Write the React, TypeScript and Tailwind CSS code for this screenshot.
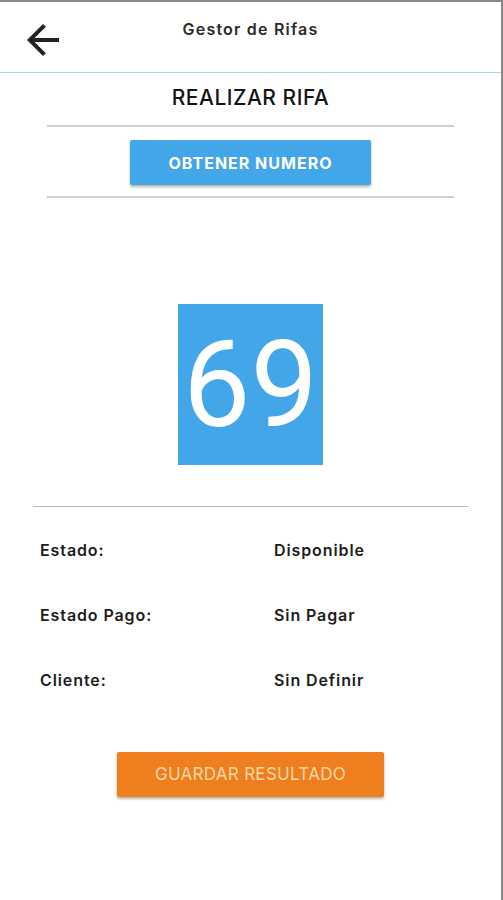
import { ReactNode } from 'react';

const font = { fontFamily: 'Inter, "Open Sans", sans-serif' };

function Row({ label, value }: { label: string; value: ReactNode }) {
  return (
    <div className="flex h-[65px] items-center text-[16px] font-semibold tracking-[0.9px] text-[#1d1d1d]">
      <span className="w-[274px] pl-[40px]">{label}</span>
      <span>{value}</span>
    </div>
  );
}

export default function App() {
  return (
    <div
      className="flex h-[900px] w-[503px] flex-col border-t-2 border-r-2 border-[#8a8a8a] bg-white"
      style={font}
    >
      {/* Header */}
      <div className="relative h-[71px] shrink-0 border-b border-[#a9d6ea]">
        <svg
          viewBox="0 0 24 24"
          className="absolute left-[19px] top-[14px] h-[48px] w-[48px] fill-[#222]"
        >
          <path d="M20 11H7.83l5.59-5.59L12 4l-8 8 8 8 1.41-1.41L7.83 13H20v-2z" />
        </svg>
        <p className="pt-[15px] text-center text-[16px] font-semibold tracking-[1.2px] text-[#2b2b2b]">
          Gestor de Rifas
        </p>
      </div>

      {/* Title */}
      <h1 className="mt-[11px] text-center text-[21px] font-medium leading-[28px] tracking-[0.5px] text-[#151515]">
        REALIZAR RIFA
      </h1>

      <div className="mx-[47px] mt-[13px] h-[2px] bg-[#cfcfcf]" />

      <div className="flex justify-center pt-[13px] pb-[11px]">
        <button className="h-[45px] w-[241px] rounded-[2px] bg-[#43a6e8] text-[16px] font-bold tracking-[1px] text-white shadow-[0_2px_3px_rgba(0,0,0,0.3)]">
          OBTENER NUMERO
        </button>
      </div>

      <div className="mx-[47px] h-[2px] bg-[#cfcfcf]" />

      {/* Number */}
      <div className="flex justify-center pt-[106px]">
        <div
          className="flex h-[161px] w-[145px] items-center justify-center bg-[#43a6e8] text-[120px] leading-none text-white"
          style={{ fontFamily: 'Roboto, "Liberation Sans", sans-serif' }}
        >
          69
        </div>
      </div>

      <div className="mx-[33px] mt-[41px] h-px bg-[#bdbdbd]" />

      {/* Details */}
      <div className="mt-[10px]">
        <Row label="Estado:" value="Disponible" />
        <Row label="Estado Pago:" value="Sin Pagar" />
        <Row label="Cliente:" value="Sin Definir" />
      </div>

      <div className="flex justify-center pt-[40px]">
        <button className="h-[45px] w-[267px] rounded-[2px] bg-[#ef7f1e] text-[17px] tracking-[0.3px] text-[#fbd7a4] shadow-[0_2px_3px_rgba(0,0,0,0.3)]">
          GUARDAR RESULTADO
        </button>
      </div>
    </div>
  );
}
